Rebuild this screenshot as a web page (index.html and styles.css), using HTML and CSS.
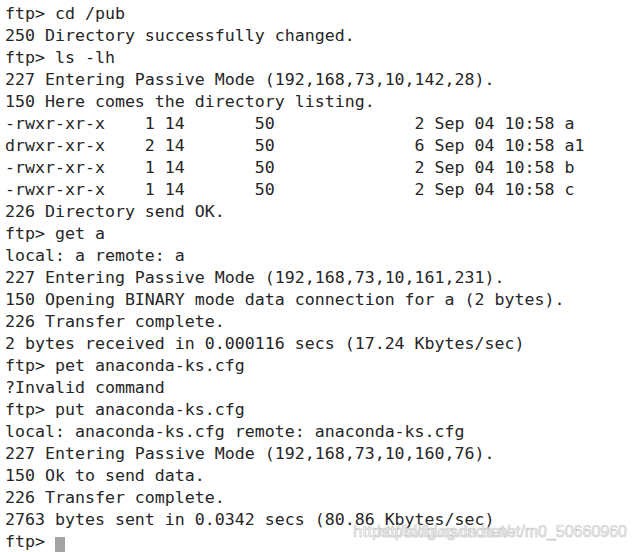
FILE: index.html
```html
<!DOCTYPE html>
<html>
<head>
<meta charset="utf-8">
<link rel="stylesheet" href="styles.css">
</head>
<body>
<div class="term">
<pre class="out">ftp&gt; cd /pub
250 Directory successfully changed.
ftp&gt; ls -lh
227 Entering Passive Mode (192,168,73,10,142,28).
150 Here comes the directory listing.
-rwxr-xr-x    1 14       50              2 Sep 04 10:58 a
drwxr-xr-x    2 14       50              6 Sep 04 10:58 a1
-rwxr-xr-x    1 14       50              2 Sep 04 10:58 b
-rwxr-xr-x    1 14       50              2 Sep 04 10:58 c
226 Directory send OK.
ftp&gt; get a
local: a remote: a
227 Entering Passive Mode (192,168,73,10,161,231).
150 Opening BINARY mode data connection for a (2 bytes).
226 Transfer complete.
2 bytes received in 0.000116 secs (17.24 Kbytes/sec)
ftp&gt; pet anaconda-ks.cfg
?Invalid command
ftp&gt; put anaconda-ks.cfg
local: anaconda-ks.cfg remote: anaconda-ks.cfg
227 Entering Passive Mode (192,168,73,10,160,76).
150 Ok to send data.
226 Transfer complete.
2763 bytes sent in 0.0342 secs (80.86 Kbytes/sec)
ftp&gt; <span class="cursor"> </span></pre>
<div class="watermark">
<span class="wm wm-a">https://blog.csdn.net/</span>
<span class="wm wm-b">https://blog.csdn.net/m0_50660960</span>
</div>
</div>
</body>
</html>
```
FILE: styles.css
```css
html, body {
  margin: 0;
  padding: 0;
  background: #ffffff;
}
.term {
  position: relative;
  width: 637px;
  height: 552px;
  overflow: hidden;
}
.out {
  margin: 0;
  padding: 3px 0 0 5px;
  font-family: "DejaVu Sans Mono", "Liberation Mono", monospace;
  font-size: 16.6px;
  line-height: 22px;
  color: #262626;
}
.cursor {
  display: inline-block;
  width: 10px;
  height: 21px;
  vertical-align: -6px;
  background: #a3a3a3;
}
.watermark {
  position: absolute;
  left: 353px;
  top: 522px;
  width: 274px;
  height: 22px;
}
.wm {
  position: absolute;
  top: 0;
  font-family: "Liberation Sans", Arial, sans-serif;
  font-size: 17px;
  white-space: nowrap;
  color: #ffffff;
  -webkit-text-stroke: 0.7px #c9c9c9;
}
.wm-a {
  left: 0;
}
.wm-b {
  right: 0;
  font-size: 16px;
  top: 1px;
}
```
